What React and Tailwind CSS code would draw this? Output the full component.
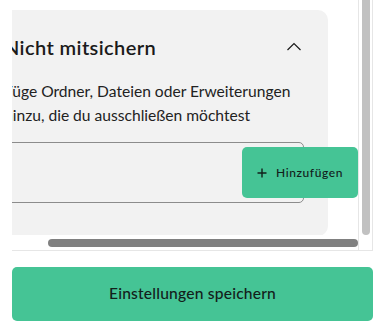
export default function App() {
  return (
    <div className="w-[385px] h-[336px] bg-white overflow-hidden" style={{ fontFamily: 'Lato, "Open Sans", sans-serif' }}>
      <div className="pl-[12px]">
        <div className="w-[361px] h-[251px] flex border-b border-r border-[#e6e6e6]">
          <div className="w-[347px] flex flex-col">
            <div className="h-[236px] overflow-hidden">
              <div className="pt-[10px] ml-[-32px] w-[348px]">
                <div className="bg-[#f2f2f2] rounded-[10px] pl-[24px] pr-[24px] pt-[24px] pb-[33px]">
                  <div className="flex items-center justify-between h-[26px]">
                    <span className="text-[20px] font-semibold text-[#1a1a1a] tracking-[0.4px]">Nicht mitsichern</span>
                    <svg width="16" height="16" viewBox="0 0 16 16" className="mr-[2px]">
                      <path d="M1.5 11 L8 4.5 L14.5 11" fill="none" stroke="#1a1a1a" strokeWidth="1.2" />
                    </svg>
                  </div>
                  <p className="mt-[19px] text-[15.6px] leading-[24px] text-[#222]">
                    Füge Ordner, Dateien oder Erweiterungen hinzu, die du ausschließen möchtest
                  </p>
                  <div className="relative mt-[15px] h-[61px] border border-[#8c8c8c] rounded-[5px]">
                    <button className="absolute right-[-55px] top-[4px] w-[116px] h-[51px] rounded-[5px] bg-[#45c495] flex items-center justify-center gap-[9px] text-[12px] font-medium tracking-[0.6px] text-[#12201b]">
                      <svg width="10" height="10" viewBox="0 0 10 10">
                        <path d="M5 0.5 V9.5 M0.5 5 H9.5" stroke="#12201b" strokeWidth="1.4" />
                      </svg>
                      Hinzufügen
                    </button>
                  </div>
                </div>
              </div>
            </div>
            <div className="h-[15px] flex items-center">
              <div className="ml-[36px] w-[310px] h-[8px] rounded-full bg-[#808080]" />
            </div>
          </div>
          <div className="w-[14px] border-l border-[#e6e6e6] flex justify-center">
            <div className="w-[8px] h-[235px] rounded-b-full bg-[#c1c1c1]" />
          </div>
        </div>
      </div>
      <div className="px-[12px] mt-[16px]">
        <button className="w-[361px] h-[54px] rounded-[5px] bg-[#45c495] text-[15.6px] font-medium text-[#13201b] tracking-[0.2px]">
          Einstellungen speichern
        </button>
      </div>
    </div>
  );
}
